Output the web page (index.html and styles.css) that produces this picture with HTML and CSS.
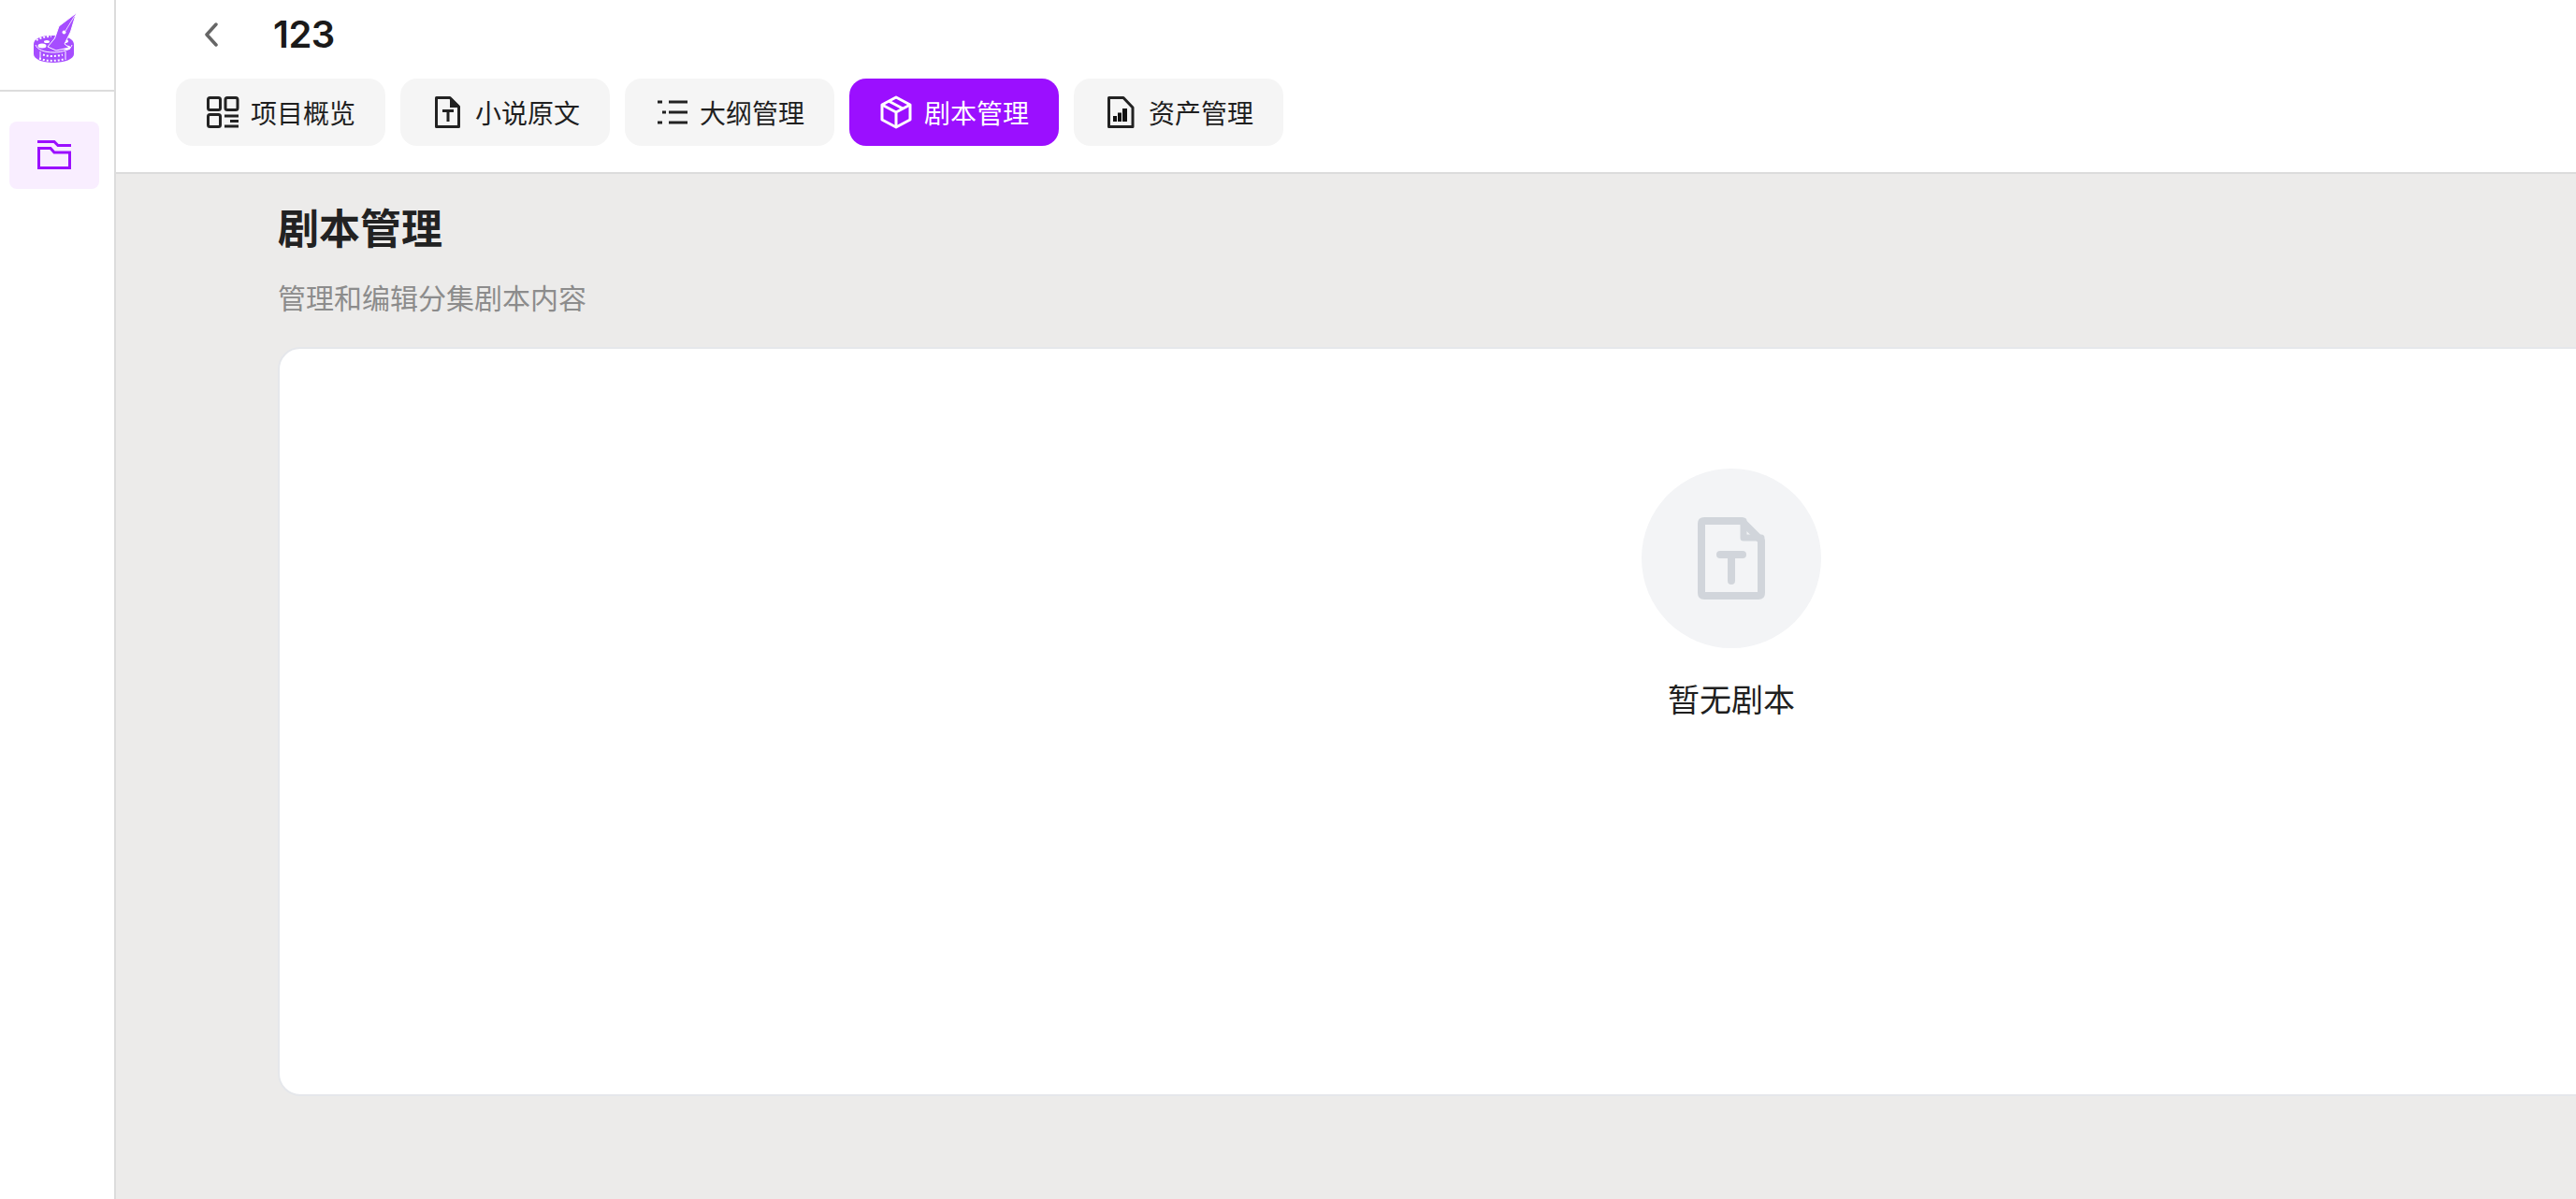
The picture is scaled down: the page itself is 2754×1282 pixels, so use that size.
FILE: index.html
```html
<!DOCTYPE html>
<html lang="zh-CN">
<head>
    <meta charset="UTF-8">
    <meta name="viewport" content="width=device-width, initial-scale=1.0">
    <title>剧本管理</title>
    <link rel="stylesheet" href="styles.css">
</head>
<body>
    <aside class="sidebar">
        <div class="logo">
            <svg width="50" height="58" viewBox="34 12 50 58">
                <path fill="#a64dff" d="M36 47c0-6 9-9 19-9 13 0 24 2 24 10v10c0 5-10 9-22 9-12 0-21-4-21-9z"/>
                <path fill="none" stroke="#fff" stroke-width="1" d="M38 48c2 5 9 8 19 8 10 0 19-3 20-8"/>
                <ellipse cx="45" cy="49" rx="4.500" ry="2.500" fill="#fff"/>
                <ellipse cx="71" cy="51" rx="4.500" ry="2.500" fill="#fff"/>
                <ellipse cx="69" cy="44" rx="4" ry="2" fill="#fff"/>
                <ellipse cx="50" cy="44.500" rx="3" ry="1.500" fill="#fff"/>
                <path fill="none" stroke="#fff" stroke-width="2" stroke-dasharray="2 2" d="M46 58.500c6 2 14 2 21 0M39 43c3-2 9-4 16-4M42 62.500c8 3 18 3 26 1"/>
                <path fill="none" stroke="#fff" stroke-width="1" d="M43 55v9M70 55v9"/>
                <path fill="#a64dff" stroke="#fff" stroke-width="1" d="M81.500 14 63 28 58.500 41 51 50 60 54 74 51 69 47 75.500 34z"/>
                <circle cx="68.500" cy="34.500" r="2" fill="#fff"/>
                <path stroke="#fff" stroke-width=".8" d="M80 16.500 70 33"/>
            </svg>
        </div>
        <div class="side-item">
            <svg width="36" height="32" viewBox="0 0 36 32" fill="none" stroke="#9b0fff" stroke-width="3">
                <path d="M0 1.500H18L22 5.500H36"/>
                <path d="M1.500 29.500V8.500H14L18 13H34.500V29.500Z"/>
            </svg>
        </div>
    </aside>
    <div class="main">
        <header class="topbar">
            <div class="title-row">
                <button class="back">
                    <svg width="16" height="26" viewBox="0 0 16 26" fill="none" stroke="#666" stroke-width="3.500" stroke-linecap="round" stroke-linejoin="round"><path d="M13 2 3 13l10 11"/></svg>
                </button>
                <span class="project-name">123</span>
            </div>
            <nav class="tabs">
                <a class="tab">
                    <svg class="tab-icon" viewBox="0 0 36 36" fill="none" stroke="#222" stroke-width="3">
                        <rect x="2.500" y="2.500" width="13" height="13" rx="2"/>
                        <rect x="21" y="2.500" width="13" height="13" rx="2"/>
                        <rect x="2.500" y="20.500" width="13" height="13" rx="2"/>
                        <path d="M20 22H35M26 27.500H35M20 33H35"/>
                    </svg>
                    <span>项目概览</span>
                </a>
                <a class="tab">
                    <svg class="tab-icon" viewBox="0 0 36 36" fill="none" stroke="#222" stroke-width="3" stroke-linejoin="round">
                        <path d="M6.500 2.500H21L30.500 12V33.500H6.500Z"/>
                        <path fill="#222" stroke="none" d="M21 3h2L31 11v2H21z"/>
                        <path d="M13 16.500H25M19 16.500V28"/>
                    </svg>
                    <span>小说原文</span>
                </a>
                <a class="tab">
                    <svg class="tab-icon" viewBox="0 0 36 36" fill="none" stroke="#222" stroke-width="3">
                        <path d="M3 7H8M15 7H35M8 18H12M15 18H35M3 29H8M15 29H35"/>
                    </svg>
                    <span>大纲管理</span>
                </a>
                <a class="tab active">
                    <svg class="tab-icon" viewBox="0 0 36 36" fill="none" stroke="#fff" stroke-width="3" stroke-linejoin="round">
                        <path d="M18 2 33 10V26L18 34 3 26V10Z"/>
                        <path d="M3 10 18 18 33 10M18 18V34M10 6 25 14"/>
                    </svg>
                    <span>剧本管理</span>
                </a>
                <a class="tab">
                    <svg class="tab-icon" viewBox="0 0 36 36" fill="none" stroke="#222" stroke-width="3" stroke-linejoin="round">
                        <path d="M5.500 2.500H21L31 13V33.500H5.500Z"/>
                        <path fill="#111" stroke="none" d="M10 22h4v6h-4zM15 18.500h4V28h-4zM20 14h5v14h-5z"/>
                    </svg>
                    <span>资产管理</span>
                </a>
            </nav>
        </header>
        <section class="content">
            <h2 class="page-title">剧本管理</h2>
            <p class="page-desc">管理和编辑分集剧本内容</p>
            <div class="card">
                <div class="empty-circle">
                    <svg width="72" height="88" viewBox="0 0 72 88" fill="none" stroke="#d1d5db" stroke-width="8" stroke-linejoin="round" stroke-linecap="round">
                        <path d="M4 7Q4 4 7 4H47L68 25V81Q68 84 65 84H7Q4 84 4 81Z"/>
                        <path d="M49 4V22H68" stroke-width="7"/>
                        <path d="M24 40H48M36 40V68"/>
                    </svg>
                </div>
                <p class="empty-text">暂无剧本</p>
            </div>
        </section>
    </div>
</body>
</html>
```
FILE: styles.css
```css
html, body {
    height: 100%;
}
body {
    margin: 0;
    display: flex;
    overflow: hidden;
    background-color: #ffffff;
    color: #1a1a1a;
    font-family: Inter, "Noto Sans CJK SC", sans-serif;
}
.sidebar {
    flex: none;
    width: 122px;
    border-right: 2px solid #dcdcdc;
}
.logo {
    height: 98px;
    box-sizing: border-box;
    padding: 12px 0 0 34px;
    border-bottom: 2px solid #dcdcdc;
}
.side-item {
    display: flex;
    align-items: center;
    justify-content: center;
    width: 96px;
    height: 72px;
    margin: 32px 0 0 10px;
    border-radius: 8px;
    background-color: #f9eeff;
}
.main {
    flex: 1;
    min-width: 0;
    display: flex;
    flex-direction: column;
    background-color: #ecebea;
}
.topbar {
    flex: none;
    height: 186px;
    box-sizing: border-box;
    padding-left: 64px;
    background-color: #ffffff;
    border-bottom: 2px solid #dcdcdc;
}
.title-row {
    display: flex;
    align-items: center;
    height: 84px;
    padding-bottom: 10px;
    box-sizing: border-box;
}
.back {
    display: flex;
    width: 104px;
    padding: 0 0 0 30px;
    border: none;
    background: none;
}
.project-name {
    font-size: 40px;
    font-weight: 600;
    line-height: 48px;
    letter-spacing: -0.5px;
    color: #1a1a1a;
}
.tabs {
    display: flex;
    gap: 16px;
}
.tab {
    display: flex;
    align-items: center;
    gap: 12px;
    height: 72px;
    padding: 0 32px;
    border-radius: 18px;
    background-color: #f5f5f5;
    color: #1f1f1f;
    font-size: 28px;
}
.tab.active {
    background-color: #9b0fff;
    color: #ffffff;
}
.tab-icon {
    width: 36px;
    height: 36px;
}
.content {
    flex: 1;
    padding: 31px 0 0 173px;
}
.page-title {
    margin: 0;
    font-size: 44px;
    font-weight: 700;
    line-height: 56px;
    color: #222222;
}
.page-desc {
    margin: 26px 0 0;
    font-size: 30px;
    line-height: 40px;
    color: #8c8c8c;
}
.card {
    display: flex;
    flex-direction: column;
    align-items: center;
    width: 3108px;
    height: 801px;
    box-sizing: border-box;
    margin-top: 32px;
    padding-top: 128px;
    background-color: #ffffff;
    border: 2px solid #e5e7eb;
    border-radius: 24px;
}
.empty-circle {
    display: flex;
    align-items: center;
    justify-content: center;
    width: 192px;
    height: 192px;
    border-radius: 50%;
    background-color: #f3f4f6;
}
.empty-text {
    margin: 32px 0 0;
    font-size: 34px;
    line-height: 48px;
    color: #1f1f1f;
}
```
